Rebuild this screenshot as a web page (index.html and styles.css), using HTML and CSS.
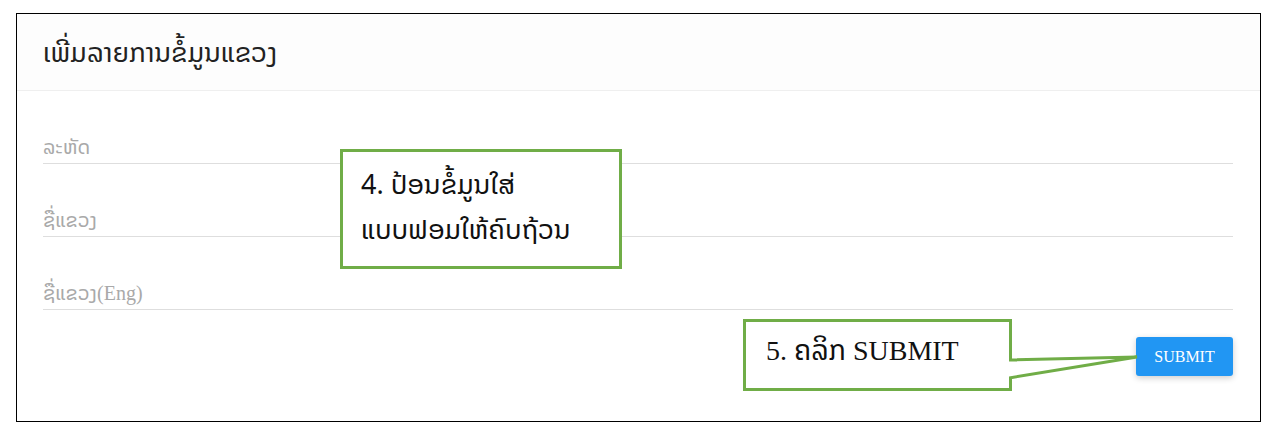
FILE: index.html
```html
<!DOCTYPE html>
<html lang="lo">
<head>
  <meta charset="UTF-8" />
  <meta name="viewport" content="width=device-width, initial-scale=1.0" />
  <title>ເພີ່ມລາຍການຂໍ້ມູນແຂວງ</title>
  <link rel="stylesheet" href="styles.css">
</head>

<body>

  <div class="card">
    <div class="card-header">
      <h2>ເພີ່ມລາຍການຂໍ້ມູນແຂວງ</h2>
    </div>

    <form class="card-body" onsubmit="return false">
      <div class="field"><label>ລະຫັດ</label></div>
      <div class="field"><label>ຊື່ແຂວງ</label></div>
      <div class="field"><label>ຊື່ແຂວງ(Eng)</label></div>

      <div class="actions">
        <button type="submit" class="submit-btn">SUBMIT</button>
      </div>
    </form>
  </div>

  <!-- guide callouts -->
  <div class="callout callout-form">
    4. ປ້ອນຂໍ້ມູນໃສ່<br>ແບບຟອມໃຫ້ຄົບຖ້ວນ
  </div>

  <svg class="callout-tail" width="140" height="40" viewBox="0 0 140 40">
    <polygon points="0,5 128,2 0,23" fill="#fff" />
    <polyline points="0,5 128,2 0,23" fill="none" stroke="#70ad47" stroke-width="3" />
  </svg>

  <div class="callout callout-submit">
    5. ຄລິກ SUBMIT
  </div>

</body>
</html>
```

FILE: styles.css
```css
body {
  margin: 0;
  padding: 13px 0 0 16px;
  background: #fff;
  font-family: "Noto Sans Lao", "Phetsarath OT", "Noto Sans", "DejaVu Sans", sans-serif;
}

.card {
  width: 1243px;
  height: 407px;
  border: 1px solid #000;
  background: #fff;
}

.card-header {
  height: 77px;
  padding-left: 26px;
  border-bottom: 1px solid #efefef;
  background: #fdfdfd;
  display: flex;
  align-items: center;
  box-sizing: border-box;
}

.card-header h2 {
  margin: 0;
  font-size: 27px;
  font-weight: normal;
  color: #222;
}

.card-body {
  padding: 0 27px 0 26px;
}

.field {
  height: 73px;
  display: flex;
  align-items: flex-end;
  padding-bottom: 5px;
  border-bottom: 1px solid #dedede;
  box-sizing: border-box;
}

.field label {
  font-family: "Liberation Serif", "Noto Sans Lao", "DejaVu Serif", serif;
  font-size: 20px;
  line-height: 22px;
  color: #a9a9a9;
}

.actions {
  display: flex;
  justify-content: flex-end;
  padding-top: 27px;
}

.submit-btn {
  width: 97px;
  height: 39px;
  border: none;
  border-radius: 3px;
  background: #2196f3;
  color: #fff;
  font-family: "Liberation Serif", serif;
  font-size: 16px;
  box-shadow: 0 2px 6px rgba(0, 0, 0, 0.2);
  cursor: pointer;
}

/* guide callouts over the form */
.callout {
  position: absolute;
  background: #fff;
  border: 3px solid #70ad47;
  box-sizing: border-box;
  color: #111;
  font-size: 27px;
}

.callout-form {
  left: 340px;
  top: 149px;
  width: 282px;
  height: 120px;
  padding: 10px 0 0 18px;
  line-height: 45px;
}

.callout-submit {
  left: 743px;
  top: 319px;
  width: 269px;
  height: 72px;
  padding: 9px 0 0 20px;
  line-height: 40px;
  font-size: 28px;
  font-family: "Liberation Serif", "Noto Sans Lao", serif;
}

.callout-tail {
  position: absolute;
  left: 1009px;
  top: 355px;
  z-index: 2;
}
```
